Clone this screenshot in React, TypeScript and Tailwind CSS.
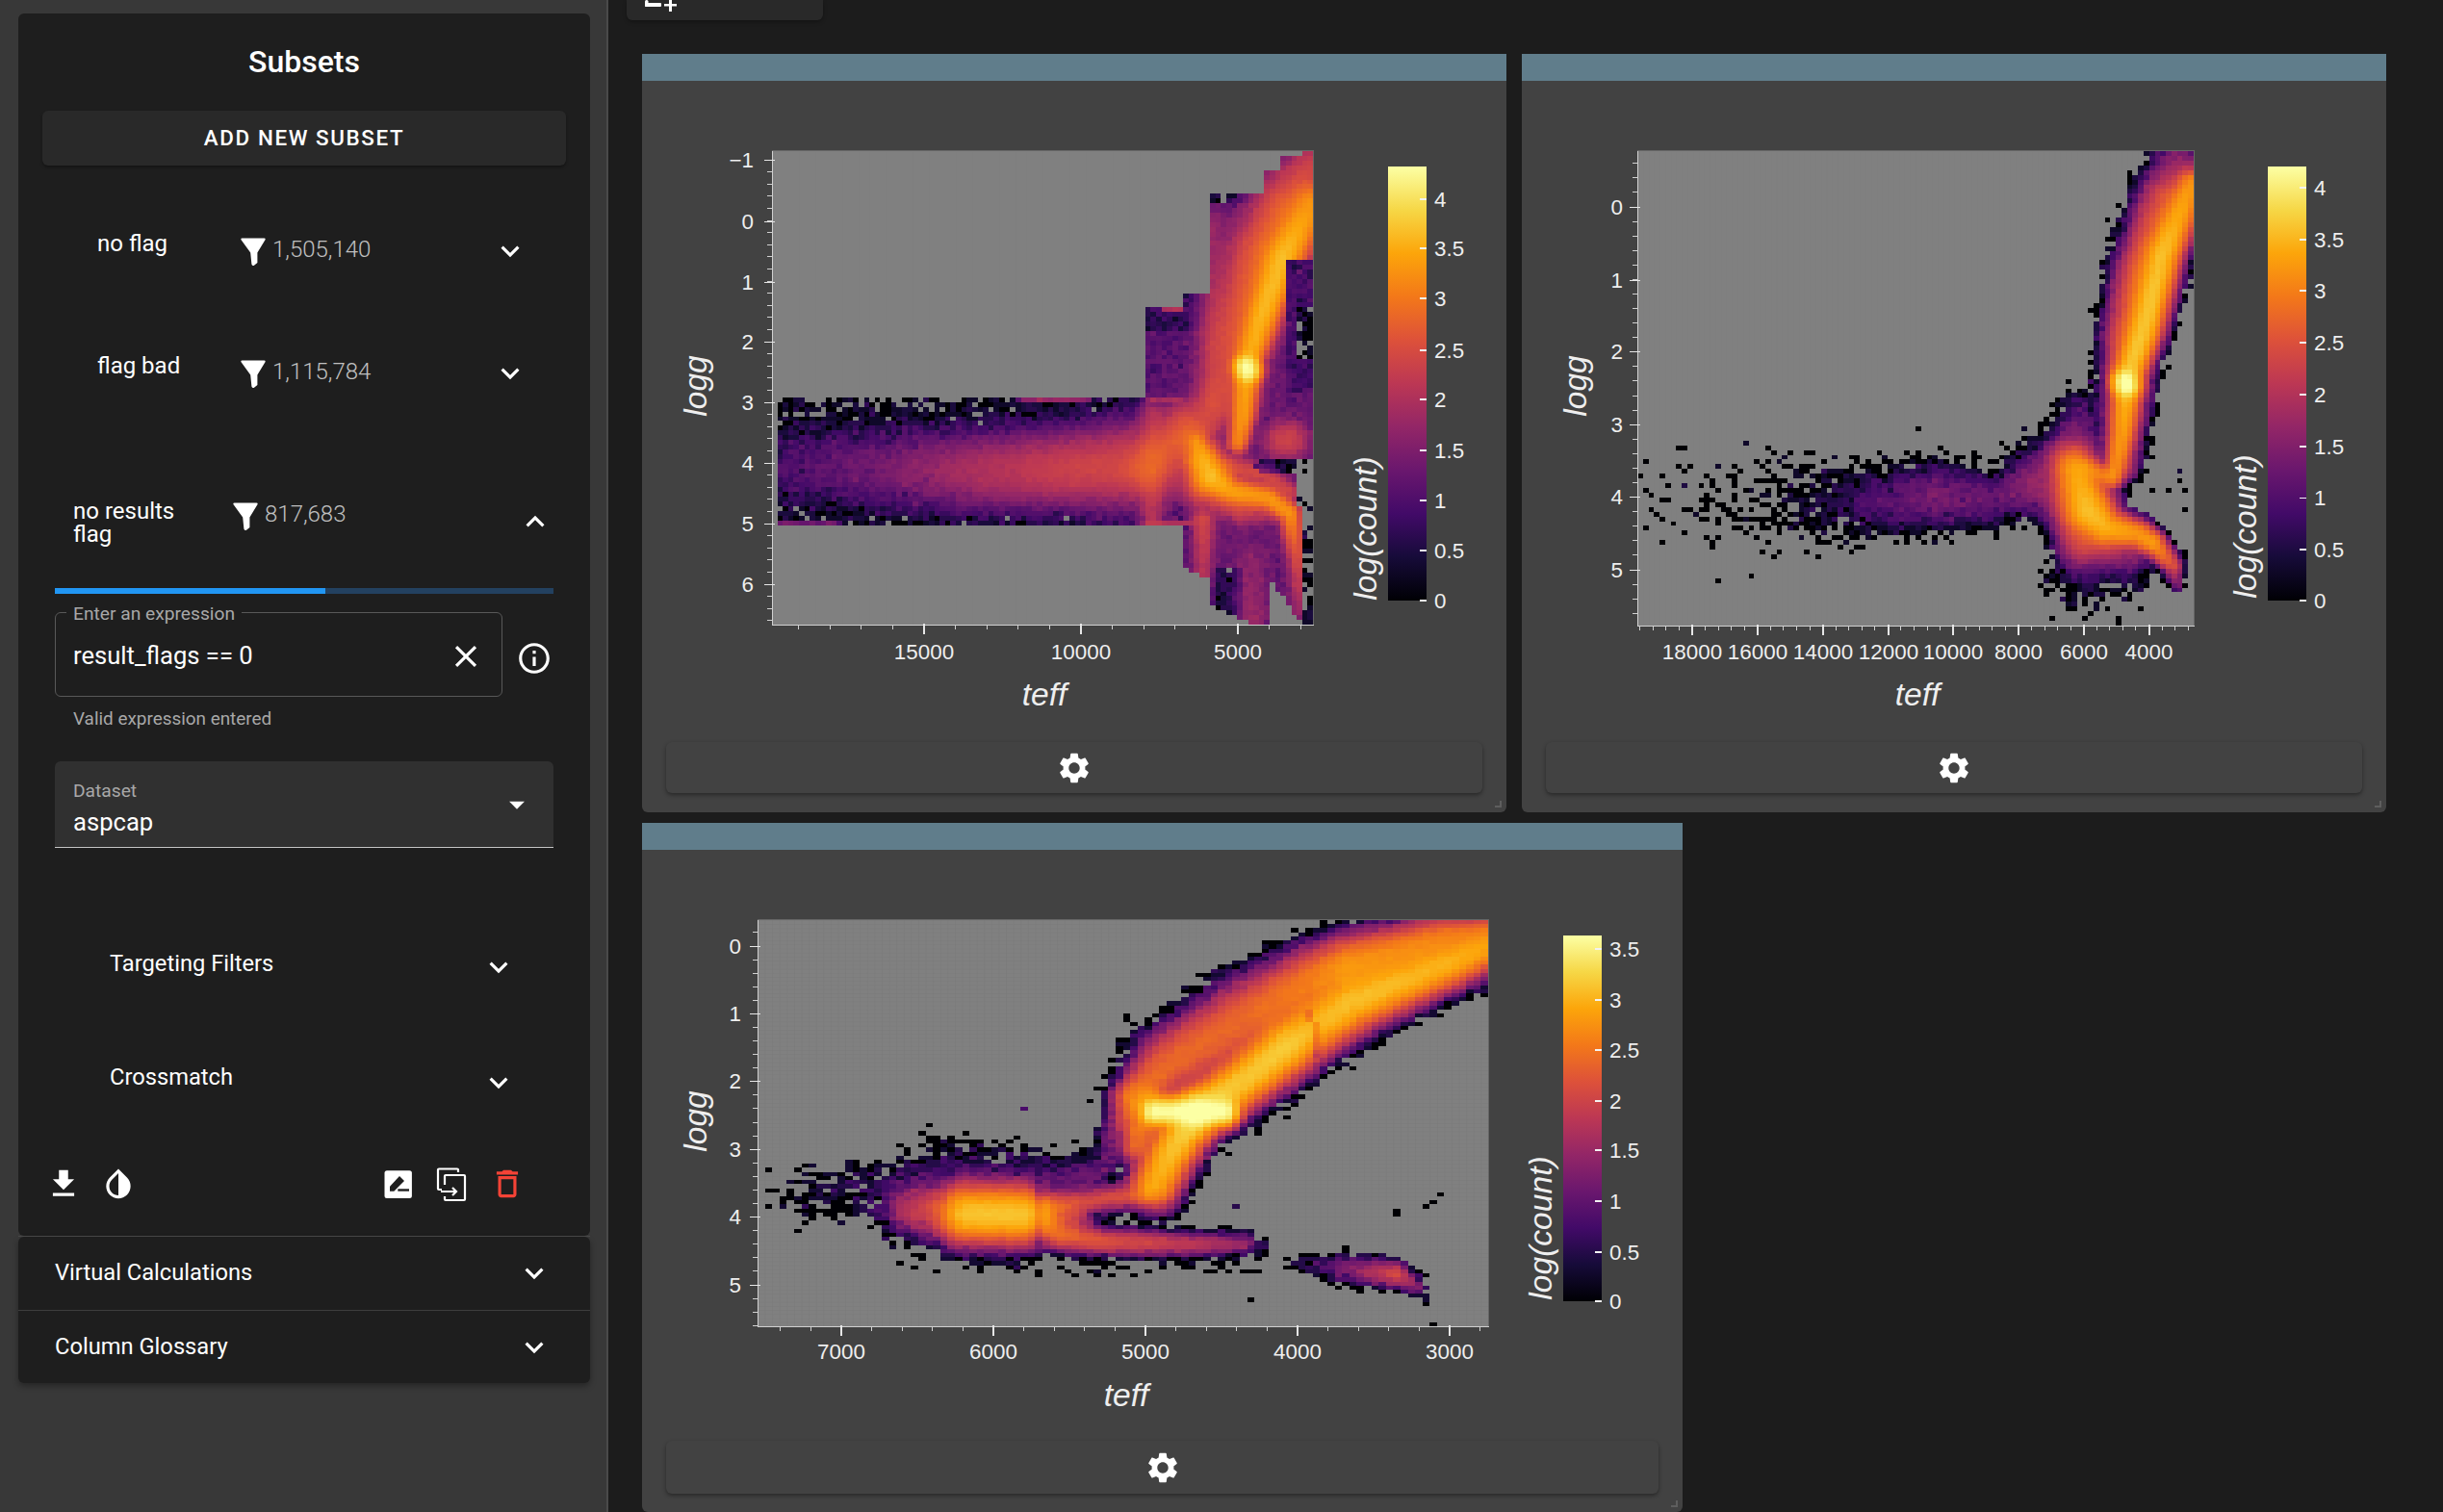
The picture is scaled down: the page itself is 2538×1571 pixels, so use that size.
import React, { useMemo } from "react";

type Pt = [number, number, number, number];
type Cfg = {
  id: string;
  box: [number, number, number, number];
  view: [number, number, number, number];
  vmax: number;
  ridges: Pt[][];
  mask?: (x: number, y: number) => boolean;
  adjust?: (x: number, y: number, l: number) => number;
  dots?: [number, number, number][];
  yTicks: [string, number][];
  ySub: number;
  xTicks: [string, number][];
  xSub: number;
  labelY: number;
  yLabelEnd: number;
  bar: [number, number, number, number];
  cTicks: [string, number][];
  teff: [number, number];
  logg: [number, number];
  logc: [number, number];
  grid: boolean;
  seed: number;
};

const STOPS = ["#000004", "#160b39", "#420a68", "#6a176e", "#932667", "#bc3754", "#dd513a", "#f37819", "#fca50a", "#f6d746", "#fcffa4"];

function hexRgb(h: string) {
  return [parseInt(h.slice(1, 3), 16), parseInt(h.slice(3, 5), 16), parseInt(h.slice(5, 7), 16)];
}

function inferno(t: number) {
  const c = Math.max(0, Math.min(0.9999, t)) * 10;
  const i = Math.floor(c);
  const a = hexRgb(STOPS[i]);
  const b = hexRgb(STOPS[i + 1]);
  const f = c - i;
  return `rgb(${Math.round(a[0] + (b[0] - a[0]) * f)},${Math.round(a[1] + (b[1] - a[1]) * f)},${Math.round(a[2] + (b[2] - a[2]) * f)})`;
}

function rng(seed: number) {
  let s = seed >>> 0;
  return () => {
    s = (s + 0x6d2b79f5) >>> 0;
    let t = s;
    t = Math.imul(t ^ (t >>> 15), t | 1);
    t ^= t + Math.imul(t ^ (t >>> 7), t | 61);
    return ((t ^ (t >>> 14)) >>> 0) / 4294967296;
  };
}

function ridgeValue(r: Pt[], x: number, y: number) {
  let best = -99;
  for (let i = 0; i < r.length - 1 || i === 0; i++) {
    const a = r[i];
    const b = r[Math.min(i + 1, r.length - 1)];
    const dx = b[0] - a[0];
    const dy = b[1] - a[1];
    const len = dx * dx + dy * dy;
    const t = len === 0 ? 0 : Math.max(0, Math.min(1, ((x - a[0]) * dx + (y - a[1]) * dy) / len));
    const d = Math.hypot(x - a[0] - dx * t, y - a[1] - dy * t);
    const p = a[2] + (b[2] - a[2]) * t;
    const s = a[3] + (b[3] - a[3]) * t;
    const v = p - 0.2171 * (d / s) * (d / s);
    if (v > best) best = v;
  }
  return best;
}

function poisson(l: number, rand: () => number) {
  if (l > 30) {
    const g = Math.sqrt(-2 * Math.log(rand() + 1e-9)) * Math.cos(6.2832 * rand());
    return Math.max(1, Math.round(l + Math.sqrt(l) * g));
  }
  const lim = Math.exp(-l);
  let k = 0;
  let p = 1;
  do {
    k++;
    p *= rand();
  } while (p > lim);
  return k - 1;
}

function buildHeat(c: Cfg) {
  const [x0, y0, x1, y1] = c.box;
  const dx = (x1 - x0) / 100;
  const dy = (y1 - y0) / 100;
  const rand = rng(c.seed);
  const byColor = new Map<string, string>();
  const add = (i: number, j: number, v: number) => {
    const col = inferno(Math.round((v / c.vmax) * 128) / 128);
    const xa = Math.round(x0 + i * dx);
    const xb = Math.round(x0 + (i + 1) * dx);
    const ya = Math.round(y0 + j * dy);
    const yb = Math.round(y0 + (j + 1) * dy);
    byColor.set(col, (byColor.get(col) || "") + `M${xa} ${ya}h${xb - xa}v${yb - ya}h${xa - xb}z`);
  };
  for (let j = 0; j < 100; j++) {
    for (let i = 0; i < 100; i++) {
      const x = x0 + (i + 0.5) * dx;
      const y = y0 + (j + 0.5) * dy;
      if (c.mask && !c.mask(x, y)) continue;
      let l = 0;
      for (const r of c.ridges) l += Math.pow(10, ridgeValue(r, x, y));
      if (c.adjust) l = c.adjust(x, y, l);
      const n = poisson(l, rand);
      if (n > 0) add(i, j, Math.min(c.vmax, Math.log10(n)));
    }
  }
  for (const d of c.dots || []) {
    add(Math.floor((d[0] - x0) / dx), Math.floor((d[1] - y0) / dy), d[2]);
  }
  return Array.from(byColor.entries());
}

const plot1: Cfg = {
  id: "a",
  box: [802, 157, 1364, 649],
  view: [667, 84, 898, 687],
  vmax: 4.3,
  seed: 11,
  ridges: [
    [[1363, 213, 3.2, 10], [1333, 267, 3.6, 9.5], [1313, 323, 3.55, 8.5], [1297, 372, 3.45, 7], [1291, 433, 3.3, 6], [1286, 460, 3.1, 5]],
    [[1295, 382, 4.25, 6], [1296, 385, 4.25, 6]],
    [[1363, 180, 2.4, 17], [1340, 220, 2.8, 18], [1313, 270, 2.8, 18], [1285, 350, 2.6, 16], [1272, 417, 2.3, 14]],
    [[1260, 230, 1.5, 7], [1258, 440, 2.1, 8]],
    [[802, 485, 0.9, 22], [900, 487, 1.3, 22], [1000, 490, 1.9, 20], [1100, 488, 2.3, 18], [1190, 483, 2.45, 20]],
    [[1193, 487, 2.5, 13], [1233, 443, 2.6, 13], [1257, 417, 1.9, 10]],
    [[1197, 430, 1.9, 7], [1197, 540, 2.0, 7]],
    [[1243, 460, 3.1, 5], [1250, 478, 3.45, 8], [1258, 495, 3.6, 9], [1277, 510, 3.3, 6], [1317, 517, 3.25, 5.5], [1340, 533, 3.25, 5], [1346, 570, 2.6, 5.5], [1351, 633, 1.7, 5]],
    [[1240, 460, 2.7, 10], [1255, 500, 2.8, 13], [1290, 522, 2.6, 10], [1320, 525, 2.3, 9]],
    [[1273, 483, 2.4, 6], [1313, 493, 2.4, 6], [1340, 512, 2.3, 5]],
    [[1250, 540, 2.4, 6], [1250, 640, 1.7, 5]],
    [[1300, 580, 1.4, 9], [1300, 649, 1.7, 9]],
    [[1333, 457, 2.3, 10], [1340, 457, 2.3, 10]],
    [[1060, 415, 1.7, 1.5], [1130, 415, 1.7, 1.5]],
    [[1195, 416, 1.9, 1.5], [1225, 416, 1.8, 1.5]],
    [[1210, 322, 2, 1.5], [1228, 322, 2, 1.5]],
    [[802, 543, 1.4, 1.5], [870, 543, 1.3, 1.5]],
    [[1190, 543, 1.9, 1.5], [1240, 543, 1.9, 1.5]],
  ],
  mask: (x, y) => {
    if (y >= 413 && y <= 545) return x > 805;
    if (x < 1190) return false;
    if (x < 1230) return y >= 320 && y <= 545;
    if (x < 1258) return y >= 305 && y <= 590 + (x - 1230) * 0.4;
    if (x < 1315) return y >= 202 && y <= 630 + (x - 1258) * 0.4;
    if (x < 1333) return y >= 178 && (x < 1318 || y < 600 + (x - 1318) * 1.4);
    if (x < 1350) return y >= 160 && y < 600 + (x - 1318) * 1.4;
    return y >= 157;
  },
  adjust: (x, y, l) => {
    let base = 0;
    if (x < 1190) base = (y > 512 && x < 1130 ? 0.8 : 1.1) + Math.max(0, (x - 1000) / 190) * 3;
    else if (y >= 413 && y <= 545 && x < 1230) base = 10;
    else if (x < 1258) base = y < 345 ? 5 : y < 413 ? 13 : 14;
    else base = y < 213 && x < 1315 ? 1.8 : y < 172 ? 1.5 : 18;
    if (x > 1255 && x < 1290 && y > 590) base = 2.5;
    let out = l + base;
    if (x > 1338 && y > 268 && y < 410) out = Math.min(out, y > 317 && y < 372 && x > 1347 ? 1.4 : 9);
    const ex = (x - 1335) / 34;
    const ey = (y - 484) / 9;
    if (ex * ex + ey * ey < 1) out *= 0.12;
    if (x > 1345 && y > 478 && y < 525) out = 0.35;
    if (x > 1352 && y >= 525) out = Math.min(out, 1);
    return out;
  },
  yTicks: [["\u22121", 166], ["0", 230], ["1", 293], ["2", 355], ["3", 418], ["4", 481], ["5", 544], ["6", 607]],
  ySub: 5,
  xTicks: [["15000", 960], ["10000", 1123], ["5000", 1286]],
  xSub: 5,
  labelY: 677,
  yLabelEnd: 783,
  bar: [1442, 173, 1482, 624],
  cTicks: [["0", 624], ["0.5", 572], ["1", 520], ["1.5", 468], ["2", 415], ["2.5", 364], ["3", 310], ["3.5", 258], ["4", 207]],
  teff: [1085, 721],
  logg: [722, 401],
  logc: [1418, 549],
  grid: false,
};

const plot2: Cfg = {
  id: "b",
  box: [1701, 157, 2279, 650],
  view: [1581, 84, 898, 687],
  vmax: 4.2,
  seed: 23,
  ridges: [
    [[2277, 193, 3.2, 8], [2247, 263, 3.55, 8.5], [2227, 343, 3.6, 8], [2212, 385, 3.6, 7], [2205, 450, 3.2, 6], [2197, 490, 3.0, 5]],
    [[2208, 396, 4.2, 6], [2209, 401, 4.2, 6]],
    [[2262, 172, 1.7, 12], [2250, 207, 2.5, 12], [2227, 283, 2.8, 11.5], [2212, 350, 2.7, 11], [2207, 433, 2.4, 9.5], [2203, 483, 2.3, 8]],
    [[2157, 490, 3.2, 9], [2170, 530, 3.55, 11], [2187, 548, 3.45, 9], [2220, 555, 3.2, 6.5], [2237, 565, 3.25, 5.5], [2257, 587, 2.5, 4.5], [2262, 607, 1.4, 4]],
    [[2153, 483, 2.8, 11], [2157, 517, 2.8, 13], [2167, 560, 2.5, 12], [2210, 572, 1.7, 12]],
    [[2167, 487, 2.9, 5], [2193, 497, 3.0, 5]],
    [[2162, 430, 1.1, 11], [2150, 480, 1.9, 15], [2120, 500, 1.5, 16]],
    [[2150, 560, 1.4, 8], [2160, 590, 0.9, 10]],
    [[1701, 520, -1.0, 28], [1780, 520, -0.6, 28], [1870, 522, 0.15, 22], [1942, 522, 0.95, 17], [2013, 515, 1.4, 16], [2074, 518, 1.2, 12], [2110, 505, 1.3, 13]],
    [[2150, 600, 0.25, 14], [2215, 600, 0.35, 10]],
    [[2150, 625, -0.3, 10], [2200, 625, -0.5, 10]],
    [[2258, 500, -0.7, 10], [2262, 520, -0.7, 10]],
  ],
  dots: [[2172, 395, 0.9], [2201, 645, 0], [2263, 490, 0.4], [2263, 600, 0.3]],
  yTicks: [["0", 215], ["1", 291], ["2", 365], ["3", 441], ["4", 516], ["5", 592]],
  ySub: 5,
  xTicks: [["18000", 1758], ["16000", 1826], ["14000", 1894], ["12000", 1962], ["10000", 2029], ["8000", 2097], ["6000", 2165], ["4000", 2232.5]],
  xSub: 5,
  labelY: 677,
  yLabelEnd: 1686,
  bar: [2356, 173, 2396, 624],
  cTicks: [["0", 624], ["0.5", 571], ["1", 517.5], ["1.5", 464], ["2", 410], ["2.5", 356], ["3", 302], ["3.5", 249], ["4", 195]],
  teff: [1992, 721],
  logg: [1636, 401],
  logc: [2332, 547],
  grid: false,
};

const plot3: Cfg = {
  id: "c",
  box: [787, 956, 1546, 1378],
  view: [667, 883, 1081, 614],
  vmax: 3.65,
  seed: 37,
  grid: true,
  ridges: [
    [[1546, 984, 2.9, 10], [1507, 1000, 3.0, 11], [1407, 1040, 3.1, 13], [1364, 1068, 3.05, 13], [1336, 1088, 3.2, 13], [1293, 1122, 3.15, 12], [1243, 1156, 3.25, 11]],
    [[1272, 1155, 3.6, 7], [1200, 1155, 3.6, 7]],
    [[1243, 1157, 3.3, 11], [1215, 1200, 3.1, 11], [1200, 1230, 2.95, 11]],
    [[1190, 1150, 2.8, 12], [1180, 1190, 2.4, 8]],
    [[1546, 966, 2.3, 7], [1500, 975, 2.6, 10], [1400, 1005, 2.8, 14], [1364, 1020, 2.6, 15], [1290, 1060, 2.4, 17], [1215, 1105, 2.4, 15], [1175, 1140, 2.4, 9], [1157, 1176, 1.3, 7], [1150, 1213, 0.9, 7]],
    [[1190, 1240, 2.2, 6], [1113, 1250, 2.0, 6], [1080, 1257, 2.4, 7]],
    [[945, 1258, 1.7, 12], [1000, 1260, 2.7, 14], [1060, 1262, 2.7, 14], [1110, 1262, 2.1, 11]],
    [[1005, 1262, 2.95, 12], [1060, 1262, 2.95, 12]],
    [[1083, 1267, 2.45, 8], [1100, 1283, 2.4, 7], [1147, 1290, 2.15, 6.5], [1247, 1293, 1.75, 6], [1293, 1292, 1.5, 5], [1314, 1295, 0.3, 4]],
    [[960, 1247, 1.2, 14], [900, 1238, 0.55, 15], [840, 1240, 0.15, 14], [800, 1240, -0.6, 10]],
    [[960, 1215, 0.5, 12], [1080, 1225, 0.7, 10], [1130, 1225, 1.2, 10]],
    [[980, 1197, 0.15, 10], [1047, 1200, 0.2, 10], [1097, 1210, 0.25, 8], [1147, 1203, 0.1, 8]],
    [[950, 1305, -0.7, 10], [1147, 1318, -0.4, 8], [1300, 1315, -0.5, 8]],
    [[1343, 1313, 0.2, 4], [1393, 1318, 1.2, 7], [1450, 1324, 2.1, 6], [1471, 1336, 1.3, 5], [1482, 1348, 0.4, 4]],
  ],
  adjust: (x, y, l) => {
    let o = l;
    if (Math.abs(x - 1077) < 4 && y > 1225 && y < 1295) o *= 0.6;
    const lineX = 1362 + (y - 1050) * 0.16;
    if (Math.abs(x - lineX) < 4 && y > 1050 && y < 1100) o *= 0.5;
    return o;
  },
  dots: [[1064, 1151, 0.8], [1286, 1253, 0.5], [1452, 1257, 0], [1452, 1262, 0], [1489, 1250, 0], [1485, 1254, 0], [1496, 1240, 0], [1300, 1350, 0], [1487, 1375, 0]],
  yTicks: [["0", 983], ["1", 1053.5], ["2", 1123], ["3", 1194], ["4", 1264], ["5", 1335]],
  ySub: 5,
  xTicks: [["7000", 874], ["6000", 1032], ["5000", 1190], ["4000", 1348], ["3000", 1506]],
  xSub: 5,
  labelY: 1404,
  yLabelEnd: 770,
  bar: [1624, 972, 1664, 1352],
  cTicks: [["0", 1352], ["0.5", 1301], ["1", 1248], ["1.5", 1195], ["2", 1144], ["2.5", 1091], ["3", 1039], ["3.5", 986]],
  teff: [1170, 1449],
  logg: [722, 1165],
  logc: [1600, 1276],
};

const PLOT_FONT = "'Liberation Sans', Arial, sans-serif";

function Plot({ c }: { c: Cfg }) {
  const heat = useMemo(() => buildHeat(c), [c]);
  const [x0, y0, x1, y1] = c.box;
  const [vx, vy, vw, vh] = c.view;
  const [bx0, by0, bx1, by1] = c.bar;

  const yMinor: number[] = [];
  const ySpacing = (c.yTicks[c.yTicks.length - 1][1] - c.yTicks[0][1]) / (c.yTicks.length - 1) / c.ySub;
  for (let y = c.yTicks[0][1] - ySpacing * 30; y < y1; y += ySpacing) {
    if (y >= y0 && y <= y1) yMinor.push(y);
  }
  const xMinor: number[] = [];
  const xSpacing = (c.xTicks[c.xTicks.length - 1][1] - c.xTicks[0][1]) / (c.xTicks.length - 1) / c.xSub;
  for (let x = c.xTicks[0][1] - xSpacing * 40; x < x1; x += xSpacing) {
    if (x >= x0 && x <= x1) xMinor.push(x);
  }

  return (
    <svg className="block" width={vw} height={vh} viewBox={`${vx} ${vy} ${vw} ${vh}`} style={{ fontFamily: PLOT_FONT }}>
      <defs>
        <linearGradient id={`cb-${c.id}`} x1="0" y1="1" x2="0" y2="0">
          {STOPS.map((s, i) => (
            <stop key={s} offset={i / 10} stopColor={s} />
          ))}
        </linearGradient>
        <pattern id={`gr-${c.id}`} x={x0} y={y0} width={(x1 - x0) / 100} height={c.grid ? (y1 - y0) / 100 : 10} patternUnits="userSpaceOnUse">
          <path d={c.grid ? `M0 0V${(y1 - y0) / 100}M0 0H${(x1 - x0) / 100}` : "M0 0V10"} stroke="#777777" strokeWidth={1} fill="none" opacity={c.grid ? 0.8 : 0.35} />
        </pattern>
      </defs>
      <rect x={x0} y={y0} width={x1 - x0} height={y1 - y0} fill="#808080" />
      <rect x={x0} y={y0} width={x1 - x0} height={y1 - y0} fill={`url(#gr-${c.id})`} />
      <g shapeRendering="crispEdges">
        {heat.map(([col, d]) => (
          <path key={col} d={d} fill={col} />
        ))}
      </g>
      <g stroke="#666666" strokeWidth={1} shapeRendering="crispEdges">
        <path d={`M${x0} ${y0 - 0.5}H${x1 + 0.5}V${y1}`} fill="none" />
      </g>
      <g stroke="#d0d0d0" strokeWidth={1} shapeRendering="crispEdges">
        <path d={`M${x0} ${y0}V${y1}H${x1 + 1}`} fill="none" />
        {yMinor.map((y, i) => (
          <line key={i} x1={x0 - 5} x2={x0} y1={y} y2={y} />
        ))}
        {c.yTicks.map(([t, y]) => (
          <line key={t} x1={x0 - 8} x2={x0 + 3} y1={y} y2={y} stroke="#e6e6e6" />
        ))}
        {xMinor.map((x, i) => (
          <line key={i} x1={x} x2={x} y1={y1} y2={y1 + 5} />
        ))}
        {c.xTicks.map(([t, x]) => (
          <line key={t} x1={x} x2={x} y1={y1 - 1} y2={y1 + 10} stroke="#e6e6e6" strokeWidth={2} />
        ))}
      </g>
      <g fill="#eeeeee" fontSize={22.4}>
        {c.yTicks.map(([t, y]) => (
          <text key={t} x={c.yLabelEnd} y={y} textAnchor="end" dominantBaseline="central">
            {t}
          </text>
        ))}
        {c.xTicks.map(([t, x]) => (
          <text key={t} x={x} y={c.labelY} textAnchor="middle" dominantBaseline="central">
            {t}
          </text>
        ))}
      </g>
      <rect x={bx0} y={by0} width={bx1 - bx0} height={by1 - by0} fill={`url(#cb-${c.id})`} />
      <g stroke="#f2f2f2" strokeWidth={1.5} shapeRendering="crispEdges">
        {c.cTicks.map(([t, y]) => (
          <line key={t} x1={bx1 - 7} x2={bx1} y1={y} y2={y} />
        ))}
      </g>
      <g fill="#eeeeee" fontSize={22.4}>
        {c.cTicks.map(([t, y]) => (
          <text key={t} x={bx1 + 8} y={y} dominantBaseline="central">
            {t}
          </text>
        ))}
      </g>
      <g fill="#eeeeee" fontSize={33.6} fontStyle="italic">
        <text x={c.teff[0]} y={c.teff[1]} textAnchor="middle" dominantBaseline="central">
          teff
        </text>
        <text x={c.logg[0]} y={c.logg[1]} textAnchor="middle" dominantBaseline="central" transform={`rotate(-90 ${c.logg[0]} ${c.logg[1]})`}>
          logg
        </text>
        <text x={c.logc[0]} y={c.logc[1]} textAnchor="middle" dominantBaseline="central" transform={`rotate(-90 ${c.logc[0]} ${c.logc[1]})`}>
          log(count)
        </text>
      </g>
    </svg>
  );
}

const I = {
  down: "M16.59 8.59 12 13.17 7.41 8.59 6 10l6 6 6-6z",
  up: "M12 8l-6 6 1.41 1.41L12 10.83l4.59 4.58L18 14z",
  close: "M19 6.41 17.59 5 12 10.59 6.41 5 5 6.41 10.59 12 5 17.59 6.41 19 12 13.41 17.59 19 19 17.59 13.41 12z",
  info: "M11 7h2v2h-2zm0 4h2v6h-2zm1-9C6.48 2 2 6.48 2 12s4.48 10 10 10 10-4.48 10-10S17.52 2 12 2zm0 18c-4.41 0-8-3.59-8-8s3.59-8 8-8 8 3.59 8 8-3.59 8-8 8z",
  caret: "M7 10l5 5 5-5z",
  file: "M5 20h14v-2H5v2zM19 9h-4V3H9v6H5l7 7 7-7z",
  drop: "M17.66 7.93 12 2.27 6.34 7.93c-3.12 3.12-3.12 8.19 0 11.31C7.9 20.8 9.95 21.58 12 21.58c2.05 0 4.1-.78 5.66-2.34 3.12-3.12 3.12-8.19 0-11.31zM12 19.59c-1.6 0-3.11-.62-4.24-1.76C6.62 16.69 6 15.19 6 13.59s.62-3.11 1.76-4.24L12 5.1v14.49z",
  trash: "M6 19c0 1.1.9 2 2 2h8c1.1 0 2-.9 2-2V7H6v12zM8 9h8v10H8V9zm7.5-5-1-1h-5l-1 1H5v2h14V4z",
  gear: "M19.14 12.94c.04-.3.06-.61.06-.94 0-.32-.02-.64-.07-.94l2.03-1.58c.18-.14.23-.41.12-.61l-1.92-3.32c-.12-.22-.37-.29-.59-.22l-2.39.96c-.5-.38-1.03-.7-1.62-.94l-.36-2.54c-.04-.24-.24-.41-.48-.41h-3.84c-.24 0-.43.17-.47.41l-.36 2.54c-.59.24-1.13.57-1.62.94l-2.39-.96c-.22-.08-.47 0-.59.22L2.74 8.87c-.12.21-.08.47.12.61l2.03 1.58c-.05.3-.09.63-.09.94s.02.64.07.94l-2.03 1.58c-.18.14-.23.41-.12.61l1.92 3.32c.12.22.37.29.59.22l2.39-.96c.5.38 1.03.7 1.62.94l.36 2.54c.05.24.24.41.48.41h3.84c.24 0 .44-.17.47-.41l.36-2.54c.59-.24 1.13-.56 1.62-.94l2.39.96c.22.08.47 0 .59-.22l1.92-3.32c.12-.22.07-.47-.12-.61l-2.01-1.58zM12 15.6c-1.98 0-3.6-1.62-3.6-3.6s1.62-3.6 3.6-3.6 3.6 1.62 3.6 3.6-1.62 3.6-3.6 3.6z",
};

function Icon({ d, className }: { d: string; className?: string }) {
  return (
    <svg viewBox="0 0 24 24" className={`block h-[38px] w-[38px] shrink-0 ${className || "fill-white"}`}>
      <path d={d} />
    </svg>
  );
}

function Funnel() {
  return (
    <svg viewBox="0 0 26 29" className="block h-[29px] w-[26px] shrink-0 fill-white">
      <path d="M1.5 0.5H24.5Q26 0.5 25.6 2L17.4 15.5V26L14 28.8Q12 29.6 11.4 27.5L10.2 15.5L0.4 2Q0 0.5 1.5 0.5Z" />
    </svg>
  );
}

function SubsetRow({ name, count, wide, className }: { name: string; count: string; wide?: boolean; className: string }) {
  return (
    <div className={`flex h-[92px] ${wide ? "pl-[57px]" : "pl-[82px]"} ${className}`}>
      {wide ? (
        <div className="flex h-[88px] w-[166px] items-center text-[24px] leading-[24px] text-white">
          <span className="w-[130px]">{name}</span>
        </div>
      ) : (
        <div className="flex h-[76px] w-[149px] items-center text-[24px] text-white">{name}</div>
      )}
      <div className={`flex items-center ${wide ? "mb-[14px]" : ""}`}>
        <Funnel />
        <span className="mb-[4px] ml-[7px] text-[24px] font-light text-[#c0c0c0]">{count}</span>
      </div>
      <div className={`ml-auto flex items-center ${wide ? "mb-[2px] mr-[38px]" : "mr-[64px]"}`}>
        <Icon d={wide ? I.up : I.down} />
      </div>
    </div>
  );
}

function Sidebar() {
  return (
    <aside className="h-full w-[632px] shrink-0 border-r-2 border-[#4a4a4a] bg-[#383838] pl-[19px] pt-[14px]">
      <div className="w-[594px] rounded-md bg-[#1e1e1e]">
        <div className="flex h-[101px] items-center justify-center pb-[2px] text-[32px] font-medium text-white">Subsets</div>
        <div className="mx-[25px] flex h-[57px] items-center justify-center rounded-md bg-[#292929] text-[22.4px] font-medium tracking-[1.6px] text-white shadow-[0_2px_3px_rgba(0,0,0,0.35)]">
          ADD NEW SUBSET
        </div>
        <SubsetRow className="mb-[35px] mt-[43px]" name="no flag" count="1,505,140" />
        <SubsetRow className="mb-[65px]" name="flag bad" count="1,115,784" />
        <SubsetRow wide className="mb-[24px] !h-[88px]" name="no results flag" count="817,683" />

        <div className="mx-[38px]">
          <div className="flex h-[6px] w-[518px] bg-[#234160]">
            <div className="w-[281px] bg-[#2196f3]" />
          </div>
          <div className="mt-[19px] flex items-center">
            <div className="relative flex h-[88px] w-[465px] items-center rounded-md border border-[#585858] pl-[18px] pr-[18px]">
              <span className="absolute left-[11px] top-[-12px] bg-[#1e1e1e] px-[7px] text-[19.2px] leading-[26px] text-[#a8a8a8]">Enter an expression</span>
              <span className="mb-[-2px] text-[25.6px] text-white">result_flags == 0</span>
              <div className="ml-auto mt-[4px]">
                <Icon d={I.close} />
              </div>
            </div>
            <div className="ml-[14px] mt-[7px]">
              <Icon d={I.info} />
            </div>
          </div>
          <div className="flex h-[46px] items-center pl-[19px] text-[18.9px] text-[#a8a8a8]">Valid expression entered</div>
          <div className="mt-[21px] flex h-[90px] w-[518px] items-center rounded-t-md border-b-[1.5px] border-[#c4c4c4] bg-[#303030] pl-[19px] pr-[19px]">
            <div className="flex h-full flex-col">
              <span className="mt-[18px] h-[26px] text-[19.2px] leading-[26px] text-[#a8a8a8]">Dataset</span>
              <span className="mt-[3px] text-[25.6px] leading-[32px] text-white">aspcap</span>
            </div>
            <div className="ml-auto">
              <Icon d={I.caret} />
            </div>
          </div>
        </div>

        <div className="ml-[95px] mt-[99px] flex h-[44px] w-[423px] items-center text-[23.7px] text-white">
          <span>Targeting Filters</span>
          <div className="ml-auto mt-[6px]">
            <Icon d={I.down} />
          </div>
        </div>
        <div className="ml-[95px] mt-[74px] flex h-[44px] w-[423px] items-center text-[23.7px] text-white">
          <span>Crossmatch</span>
          <div className="ml-auto mt-[10px]">
            <Icon d={I.down} />
          </div>
        </div>

        <div className="mt-[69px] flex pb-[35px] pl-[28px]">
          <Icon d={I.file} />
          <div className="ml-[19px]">
            <Icon d={I.drop} />
          </div>
          <svg viewBox="5 10 38 38" className="ml-[253px] block h-[38px] w-[38px] shrink-0">
            <rect x="9.5" y="15.3" width="28.4" height="28.7" rx="2.5" fill="#ffffff" />
            <path d="M15 31.7V36.7H19.3L30 26L25 21Z" fill="#1e1e1e" />
            <rect x="23.3" y="34.3" width="11.7" height="2.4" fill="#1e1e1e" />
          </svg>
          <svg viewBox="60 10 38 38" className="ml-[17px] block h-[38px] w-[38px] shrink-0" fill="none" stroke="#ffffff" strokeWidth="2.2">
            <path d="M86 17V14.5Q86 13.5 85 13.5H66Q65 13.5 65 14.5V34Q65 35 66 35H69" />
            <path d="M72 30V21Q72 20 73 20H92Q93 20 93 21V45Q93 46 92 46H73Q72 46 72 45V42" />
            <path d="M68 37H84M80 33L84 37L80 41" />
          </svg>
          <div className="ml-[20px]">
            <Icon d={I.trash} className="fill-[#f44336]" />
          </div>
        </div>
      </div>
      <div className="h-px w-[594px] bg-[#4a4a4a]" />
      <div className="w-[594px] rounded-md bg-[#1e1e1e] text-[23.7px] text-white shadow-[0_3px_6px_rgba(0,0,0,0.35)]">
        <div className="flex h-[76px] items-center pl-[38px] pr-[39px]">
          <span>Virtual Calculations</span>
          <div className="ml-auto">
            <Icon d={I.down} />
          </div>
        </div>
        <div className="h-px bg-[#3d3d3d]" />
        <div className="flex h-[75px] items-center pl-[38px] pr-[39px]">
          <span>Column Glossary</span>
          <div className="ml-auto">
            <Icon d={I.down} />
          </div>
        </div>
      </div>
    </aside>
  );
}

function Panel({ c, width, height, barH }: { c: Cfg; width: string; height: string; barH: string }) {
  return (
    <section className={`flex flex-col ${width} ${height}`}>
      <div className="h-[28px] shrink-0 bg-[#607d8b]" />
      <div className="relative flex min-h-0 flex-1 flex-col rounded-b-md bg-[#424242]">
        <Plot c={c} />
        <div className={`mx-[25px] flex items-center justify-center rounded-md bg-[#424242] shadow-[0_2px_4px_rgba(0,0,0,0.4)] ${barH}`}>
          <Icon d={I.gear} />
        </div>
        <div className="absolute bottom-[5px] right-[5px] h-[7px] w-[7px] border-b-2 border-r-2 border-[#5e5e5e]" />
      </div>
    </section>
  );
}

export default function App() {
  return (
    <div className="flex h-[1571px] w-[2538px] overflow-hidden bg-[#1c1c1c] font-[Roboto]">
      <Sidebar />
      <main className="min-w-0 flex-1">
        <div className="ml-[19px] h-[21px] w-[204px] overflow-hidden rounded-b-md bg-[#292929] shadow-[0_2px_4px_rgba(0,0,0,0.3)]">
          <svg viewBox="0 0 40 12" className="ml-[19px] block h-[12px] w-[40px]" fill="#ffffff">
            <rect x="0" y="0" width="3.5" height="7" rx="1.5" />
            <rect x="0" y="3" width="17" height="4" rx="1" />
            <rect x="20" y="4" width="13" height="2.5" />
            <rect x="25" y="0" width="3" height="12" />
          </svg>
        </div>
        <div className="ml-[35px] mt-[35px] flex gap-[16px]">
          <Panel c={plot1} width="w-[898px]" height="h-[788px]" barH="h-[53px]" />
          <Panel c={plot2} width="w-[898px]" height="h-[788px]" barH="h-[53px]" />
        </div>
        <div className="ml-[35px] mt-[11px]">
          <Panel c={plot3} width="w-[1081px]" height="h-[716px]" barH="h-[55px]" />
        </div>
      </main>
    </div>
  );
}
